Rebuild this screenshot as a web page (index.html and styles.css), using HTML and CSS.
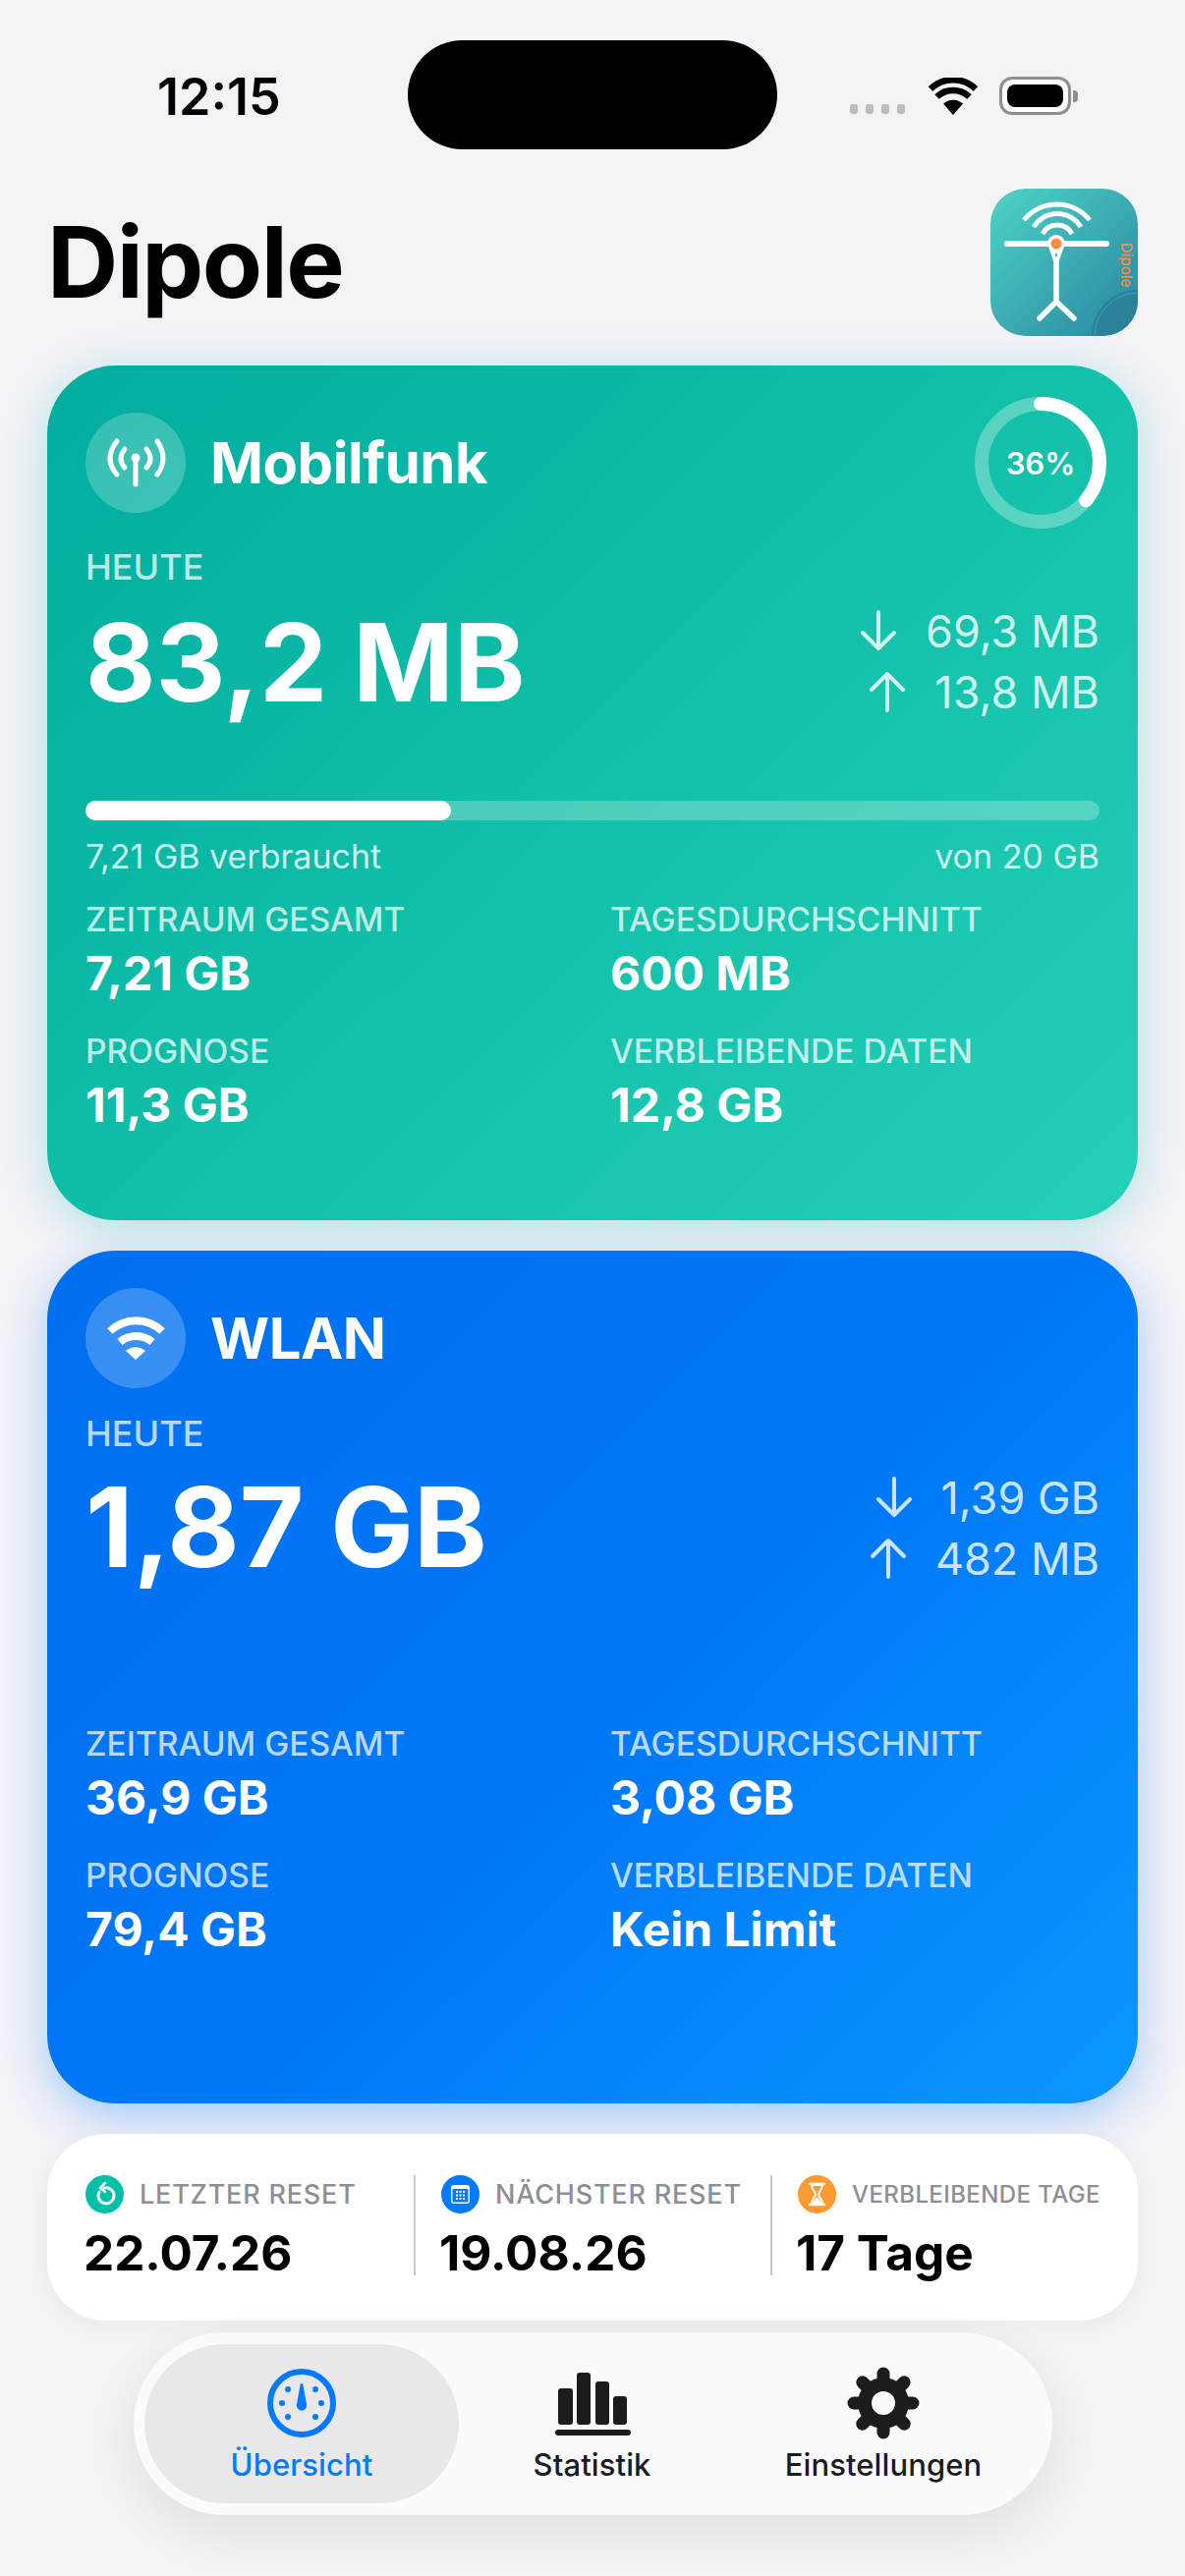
FILE: index.html
```html
<!DOCTYPE html>
<html lang="de">

<head>
    <meta charset="UTF-8">
    <meta name="viewport" content="width=device-width, initial-scale=1.0">
    <title>Dipole</title>
    <link rel="stylesheet" href="styles.css">
</head>

<body>

    <div class="status-bar">
        <div class="time">12:15</div>
        <div class="island"></div>
        <div class="status-icons">
            <div class="signal"><span></span><span></span><span></span><span></span></div>
            <svg class="status-wifi" viewBox="0 0 52 38">
                <path d="M26 38 L16 26.500 A15 15 0 0 1 36 26.500 Z" fill="#000"/>
                <path d="M9.500 19.500 A24 24 0 0 1 42.500 19.500" fill="none" stroke="#000" stroke-width="6.500"/>
                <path d="M3 11.500 A33 33 0 0 1 49 11.500" fill="none" stroke="#000" stroke-width="6.500"/>
            </svg>
            <div class="battery"><div class="battery-fill"></div></div>
            <div class="battery-nub"></div>
        </div>
    </div>

    <div class="header">
        <h1>Dipole</h1>
        <svg class="app-icon" viewBox="0 0 150 150">
            <defs>
                <linearGradient id="logoBg" x1="0" y1="0" x2="1" y2="1">
                    <stop offset="0" stop-color="#4dd4c6"/>
                    <stop offset="1" stop-color="#2a84a0"/>
                </linearGradient>
                <clipPath id="logoClip"><rect width="150" height="150" rx="36"/></clipPath>
            </defs>
            <g clip-path="url(#logoClip)">
                <rect width="150" height="150" fill="url(#logoBg)"/>
                <circle cx="150" cy="150" r="47" fill="#2a8199"/>
                <circle cx="150" cy="150" r="44" fill="none" stroke="#58a5b8" stroke-width="0.800"/>
            </g>
            <g fill="none" stroke="#fff" stroke-width="5">
                <path d="M34 32 A43 43 0 0 1 101 32"/>
                <path d="M44 39 A28 28 0 0 1 92 39"/>
                <path d="M53 46 A17 17 0 0 1 83 46"/>
            </g>
            <g stroke="#fff" stroke-linecap="round" fill="none">
                <path d="M17 56 H118" stroke-width="6"/>
                <path d="M67 70 V115 M67 115 L50 132 M67 115 L85 132" stroke-width="5.500"/>
            </g>
            <path d="M67 47 A9 9 0 0 1 76 56 L69 76 H65 L58 56 A9 9 0 0 1 67 47 Z" fill="#fff"/>
            <circle cx="67" cy="56" r="5.500" fill="#ff8c3c"/>
            <path d="M67 66 V69" stroke="#2f9aa8" stroke-width="1.500"/>
            <text class="logo-text" transform="translate(133 55) rotate(90)">Dipole</text>
        </svg>
    </div>

    <div class="card card-mobile">
        <div class="card-head">
            <div class="head-icon">
                <svg viewBox="0 0 102 102" fill="none" stroke="#fff" stroke-width="5" stroke-linecap="round">
                    <path d="M51 46 V73"/>
                    <path d="M40 37 Q32 47 40 56"/>
                    <path d="M62 37 Q70 47 62 56"/>
                    <path d="M32 29 Q18 47 32 63"/>
                    <path d="M73 29 Q85 47 73 63"/>
                    <circle cx="51" cy="46" r="4.500" fill="#fff" stroke="none"/>
                </svg>
            </div>
            <div class="card-title">Mobilfunk</div>
            <div class="ring">
                <svg viewBox="0 0 134 134" fill="none" stroke-width="14">
                    <circle cx="67" cy="67" r="60" stroke="rgba(255,255,255,0.3)"/>
                    <circle cx="67" cy="67" r="60" stroke="#fff" stroke-linecap="round" stroke-dasharray="135.700 377" transform="rotate(-90 67 67)"/>
                </svg>
                <span>36%</span>
            </div>
        </div>
        <div class="today-label today-mobile">HEUTE</div>
        <div class="today-row">
            <div class="today-value">83,2 MB</div>
            <div class="transfer">
                <div class="transfer-line">
                    <svg viewBox="0 0 36 42" fill="none" stroke="currentColor" stroke-width="4" stroke-linecap="round" stroke-linejoin="round"><path d="M18 2 V39 M2 23 L18 39 L34 23"/></svg>
                    <span>69,3 MB</span>
                </div>
                <div class="transfer-line">
                    <svg viewBox="0 0 36 42" fill="none" stroke="currentColor" stroke-width="4" stroke-linecap="round" stroke-linejoin="round"><path d="M18 40 V3 M2 19 L18 3 L34 19"/></svg>
                    <span>13,8 MB</span>
                </div>
            </div>
        </div>
        <div class="progress"><div class="progress-fill"></div></div>
        <div class="progress-labels">
            <span>7,21 GB verbraucht</span>
            <span>von 20 GB</span>
        </div>
        <div class="stats stats-mobile">
            <div class="stat"><div class="stat-label">ZEITRAUM GESAMT</div><div class="stat-value">7,21 GB</div></div>
            <div class="stat"><div class="stat-label">TAGESDURCHSCHNITT</div><div class="stat-value">600 MB</div></div>
            <div class="stat"><div class="stat-label">PROGNOSE</div><div class="stat-value">11,3 GB</div></div>
            <div class="stat"><div class="stat-label">VERBLEIBENDE DATEN</div><div class="stat-value">12,8 GB</div></div>
        </div>
    </div>

    <div class="card card-wifi">
        <div class="card-head">
            <div class="head-icon">
                <svg viewBox="0 0 102 102">
                    <path d="M51 73 L41 64 A15 15 0 0 1 61 64 Z" fill="#fff"/>
                    <path d="M35 55 A26 26 0 0 1 68 55" fill="none" stroke="#fff" stroke-width="8"/>
                    <path d="M25 44 A38 38 0 0 1 78 44" fill="none" stroke="#fff" stroke-width="8"/>
                </svg>
            </div>
            <div class="card-title">WLAN</div>
        </div>
        <div class="today-label today-wifi">HEUTE</div>
        <div class="today-row">
            <div class="today-value">1,87 GB</div>
            <div class="transfer">
                <div class="transfer-line">
                    <svg viewBox="0 0 36 42" fill="none" stroke="currentColor" stroke-width="4" stroke-linecap="round" stroke-linejoin="round"><path d="M18 2 V39 M2 23 L18 39 L34 23"/></svg>
                    <span>1,39 GB</span>
                </div>
                <div class="transfer-line">
                    <svg viewBox="0 0 36 42" fill="none" stroke="currentColor" stroke-width="4" stroke-linecap="round" stroke-linejoin="round"><path d="M18 40 V3 M2 19 L18 3 L34 19"/></svg>
                    <span>482 MB</span>
                </div>
            </div>
        </div>
        <div class="stats stats-wifi">
            <div class="stat"><div class="stat-label">ZEITRAUM GESAMT</div><div class="stat-value">36,9 GB</div></div>
            <div class="stat"><div class="stat-label">TAGESDURCHSCHNITT</div><div class="stat-value">3,08 GB</div></div>
            <div class="stat"><div class="stat-label">PROGNOSE</div><div class="stat-value">79,4 GB</div></div>
            <div class="stat"><div class="stat-label">VERBLEIBENDE DATEN</div><div class="stat-value">Kein Limit</div></div>
        </div>
    </div>

    <div class="info-card">
        <div class="info-item">
            <div class="info-head">
                <svg class="info-icon" viewBox="0 0 39 39">
                    <circle cx="19.500" cy="19.500" r="19.500" fill="#00bfa8"/>
                    <path d="M14 17 A8 8 0 1 0 19.500 13" fill="none" stroke="#fff" stroke-width="3" stroke-linecap="round"/>
                    <path d="M20 8 L15 13 L20 17" fill="none" stroke="#fff" stroke-width="2.500" stroke-linecap="round" stroke-linejoin="round"/>
                </svg>
                <span class="info-label">LETZTER RESET</span>
            </div>
            <div class="info-value">22.07.26</div>
        </div>
        <div class="info-item">
            <div class="info-head">
                <svg class="info-icon" viewBox="0 0 39 39">
                    <circle cx="19.500" cy="19.500" r="19.500" fill="#007aff"/>
                    <rect x="10" y="10" width="19" height="19" rx="3" fill="#fff"/>
                    <rect x="11.500" y="14" width="16" height="13.500" rx="1" fill="#007aff"/>
                    <path d="M15 17 H25 M15 20.500 H25 M15 24 H25" stroke="#fff" stroke-width="2" stroke-dasharray="2 1.500"/>
                </svg>
                <span class="info-label">NÄCHSTER RESET</span>
            </div>
            <div class="info-value">19.08.26</div>
        </div>
        <div class="info-item">
            <div class="info-head">
                <svg class="info-icon" viewBox="0 0 39 39">
                    <circle cx="19.500" cy="19.500" r="19.500" fill="#ff9a2e"/>
                    <path d="M12 9 H27 M12 30 H27" stroke="#fff" stroke-width="2.500" stroke-linecap="round"/>
                    <path d="M14 10 H25 C25 15 21 17 21 19.500 C21 22 25 24 25 29 H14 C14 24 18 22 18 19.500 C18 17 14 15 14 10 Z" fill="none" stroke="#fff" stroke-width="2"/>
                    <path d="M15.500 28.500 C16 25 18.500 24 19.500 22 C20.500 24 23 25 23.500 28.500 Z" fill="#fff"/>
                </svg>
                <span class="info-label info-label-small">VERBLEIBENDE TAGE</span>
            </div>
            <div class="info-value">17 Tage</div>
        </div>
    </div>

    <div class="tab-bar">
        <div class="tab tab-active">
            <svg class="tab-icon" viewBox="0 0 74 74">
                <circle cx="37" cy="37" r="32" fill="none" stroke="#007aff" stroke-width="6"/>
                <g fill="#007aff">
                    <circle cx="17" cy="37" r="3"/>
                    <circle cx="57" cy="37" r="3"/>
                    <circle cx="23" cy="23" r="3"/>
                    <circle cx="51" cy="23" r="3"/>
                    <circle cx="23" cy="51" r="3"/>
                    <circle cx="51" cy="51" r="3"/>
                    <path d="M37 17 C38 17 38.500 18 38.700 20 L42 38 A5.200 5.200 0 1 1 32 38 L35.300 20 C35.500 18 36 17 37 17 Z"/>
                </g>
            </svg>
            <span>Übersicht</span>
        </div>
        <div class="tab">
            <svg class="tab-icon" viewBox="0 0 78 74">
                <g fill="#1c1c1e">
                    <rect x="4" y="22" width="15" height="37" rx="3"/>
                    <rect x="23" y="6" width="14" height="53" rx="3"/>
                    <rect x="42" y="15" width="14" height="44" rx="3"/>
                    <rect x="60" y="30" width="14" height="29" rx="3"/>
                    <rect x="1" y="64" width="77" height="6" rx="3"/>
                </g>
            </svg>
            <span>Statistik</span>
        </div>
        <div class="tab">
            <svg class="tab-icon" viewBox="0 0 74 74">
                <circle cx="37" cy="37" r="26" fill="#1c1c1e"/>
                <g stroke="#1c1c1e" stroke-width="13" stroke-linecap="round">
                    <path d="M37 7 V67"/>
                    <path d="M7 37 H67"/>
                    <path d="M15.800 15.800 L58.200 58.200"/>
                    <path d="M58.200 15.800 L15.800 58.200"/>
                </g>
                <circle cx="37" cy="37" r="12" fill="#fbfbfd"/>
            </svg>
            <span>Einstellungen</span>
        </div>
    </div>

</body>

</html>
```

FILE: styles.css
```css
* {
    box-sizing: border-box;
    margin: 0;
    padding: 0;
    font-family: Inter, "Liberation Sans", sans-serif;
}

body {
    width: 1206px;
    height: 2622px;
    padding: 0 48px;
    background-color: #f2f2f7;
    overflow: hidden;
}

/* status bar */
.status-bar {
    height: 152px;
    padding-top: 41px;
    display: flex;
    align-items: flex-start;
}

.time {
    width: 367px;
    padding: 33px 0 0 112px;
    font-size: 52px;
    line-height: 50px;
    font-weight: 600;
    color: #000;
}

.island {
    width: 376px;
    height: 111px;
    border-radius: 56px;
    background-color: #000;
}

.status-icons {
    display: flex;
    align-items: center;
    margin: 37px 0 0 74px;
}

.signal {
    display: flex;
    gap: 8px;
    margin: 27px 23px 0 0;
}

.signal span {
    width: 8px;
    height: 10px;
    border-radius: 3px;
    background-color: #bcbcc0;
}

.status-wifi {
    width: 52px;
    height: 38px;
    margin-right: 21px;
}

.battery {
    width: 73px;
    height: 39px;
    padding: 5px;
    border: 3px solid #8f8f93;
    border-radius: 13px;
    background-color: #fff;
}

.battery-fill {
    width: 100%;
    height: 100%;
    border-radius: 8px;
    background-color: #000;
}

.battery-nub {
    width: 5px;
    height: 12px;
    margin-left: 2px;
    border-radius: 0 4px 4px 0;
    background-color: #8f8f93;
}

/* header */
.header {
    height: 150px;
    margin: 40px 0 30px;
    display: flex;
    justify-content: space-between;
    align-items: center;
}

.header h1 {
    font-size: 100px;
    line-height: 120px;
    font-weight: 700;
    letter-spacing: -1.500px;
    color: #000;
}

.app-icon {
    width: 150px;
    height: 150px;
}

.logo-text {
    font-size: 15px;
    font-weight: 500;
    fill: #ff8c3c;
}

/* cards */
.card {
    height: 870px;
    margin-bottom: 31px;
    padding: 48px 39px 0;
    border-radius: 70px;
    color: #fff;
}

.card-mobile {
    background: linear-gradient(135deg, #00ad9f 0%, #12bfa9 50%, #24d0b8 100%);
    box-shadow: 0 8px 44px rgba(0, 190, 165, 0.28);
}

.card-wifi {
    height: 868px;
    padding-top: 38px;
    background: linear-gradient(135deg, #006fef 0%, #0079f8 55%, #0c98ff 100%);
    box-shadow: 0 14px 44px rgba(0, 122, 255, 0.32);
}

.card-head {
    height: 102px;
    display: flex;
    align-items: center;
}

.head-icon {
    width: 102px;
    height: 102px;
    margin-right: 25px;
    border-radius: 50%;
    background-color: rgba(255, 255, 255, 0.22);
}

.head-icon svg {
    display: block;
    width: 102px;
    height: 102px;
}

.card-title {
    font-size: 58px;
    line-height: 70px;
    font-weight: 700;
    letter-spacing: -0.500px;
}

.ring {
    position: relative;
    width: 134px;
    height: 134px;
    margin: -17px -7px -17px auto;
}

.ring svg {
    display: block;
    width: 134px;
    height: 134px;
}

.ring span {
    position: absolute;
    inset: 0;
    display: flex;
    justify-content: center;
    align-items: center;
    font-size: 31px;
    font-weight: 600;
}

.today-label {
    font-size: 36px;
    line-height: 40px;
    font-weight: 500;
    color: rgba(255, 255, 255, 0.72);
}

.today-mobile {
    margin-top: 35px;
}

.today-wifi {
    margin-top: 26px;
}

.today-row {
    margin-top: 10px;
    display: flex;
    justify-content: space-between;
}

.today-value {
    margin-top: -3px;
    font-size: 110px;
    line-height: 140px;
    font-weight: 700;
}

.card-wifi .today-value {
    margin-top: -5px;
    font-size: 113px;
}

.transfer {
    padding-top: 4px;
}

.transfer-line {
    height: 62px;
    display: flex;
    justify-content: flex-end;
    align-items: center;
    font-size: 45px;
    color: rgba(255, 255, 255, 0.8);
}

.transfer-line svg {
    width: 36px;
    height: 42px;
    margin-right: 30px;
}

.progress {
    height: 20px;
    margin-top: 71px;
    border-radius: 10px;
    background-color: rgba(255, 255, 255, 0.25);
}

.progress-fill {
    width: 36%;
    height: 100%;
    border-radius: 10px;
    background-color: #fff;
}

.progress-labels {
    margin-top: 17px;
    display: flex;
    justify-content: space-between;
    font-size: 34px;
    line-height: 40px;
    color: rgba(255, 255, 255, 0.8);
}

.stats {
    display: grid;
    grid-template-columns: 534px 1fr;
    row-gap: 31px;
}

.stats-mobile {
    margin-top: 24px;
}

.stats-wifi {
    margin-top: 131px;
}

.stat-label {
    font-size: 33.600px;
    line-height: 40px;
    font-weight: 500;
    color: rgba(255, 255, 255, 0.72);
}

.stat-value {
    margin-top: 7px;
    font-size: 48px;
    line-height: 56px;
    font-weight: 700;
}

/* bottom info */
.info-card {
    height: 190px;
    padding: 42px 0 0 39px;
    display: grid;
    grid-template-columns: 334px 363px 1fr;
    border-radius: 60px;
    background-color: #fff;
    box-shadow: 0 4px 24px rgba(0, 0, 0, 0.04);
}

.info-item {
    height: 102px;
    border-left: 2px solid #c9c9cd;
    padding-left: 26px;
}

.info-item:first-child {
    border-left: none;
    padding-left: 0;
}

.info-head {
    height: 39px;
    display: flex;
    align-items: center;
}

.info-icon {
    width: 39px;
    height: 39px;
    margin-right: 16px;
}

.info-label {
    font-size: 27px;
    font-weight: 500;
    letter-spacing: 0.800px;
    color: #8e8e93;
}

.info-label-small {
    font-size: 24px;
    letter-spacing: 0.400px;
}

.info-value {
    margin: 10px 0 0 -2px;
    font-size: 49.500px;
    line-height: 60px;
    font-weight: 700;
    color: #000;
}

/* tab bar */
.tab-bar {
    width: 935px;
    height: 186px;
    margin: 12px 0 0 88px;
    padding: 12px 11px;
    display: grid;
    grid-template-columns: 320px 271px 1fr;
    border-radius: 93px;
    background-color: #fbfbfd;
    box-shadow: 0 16px 50px rgba(0, 0, 0, 0.08);
}

.tab {
    padding-top: 23px;
    display: flex;
    flex-direction: column;
    align-items: center;
    font-size: 31px;
    line-height: 38px;
    font-weight: 500;
    letter-spacing: 0.100px;
    color: #1c1c1e;
}

.tab-active {
    border-radius: 81px;
    background-color: #e8e8ea;
    color: #007aff;
}

.tab-icon {
    display: block;
    height: 74px;
    margin-bottom: 7px;
}
```
